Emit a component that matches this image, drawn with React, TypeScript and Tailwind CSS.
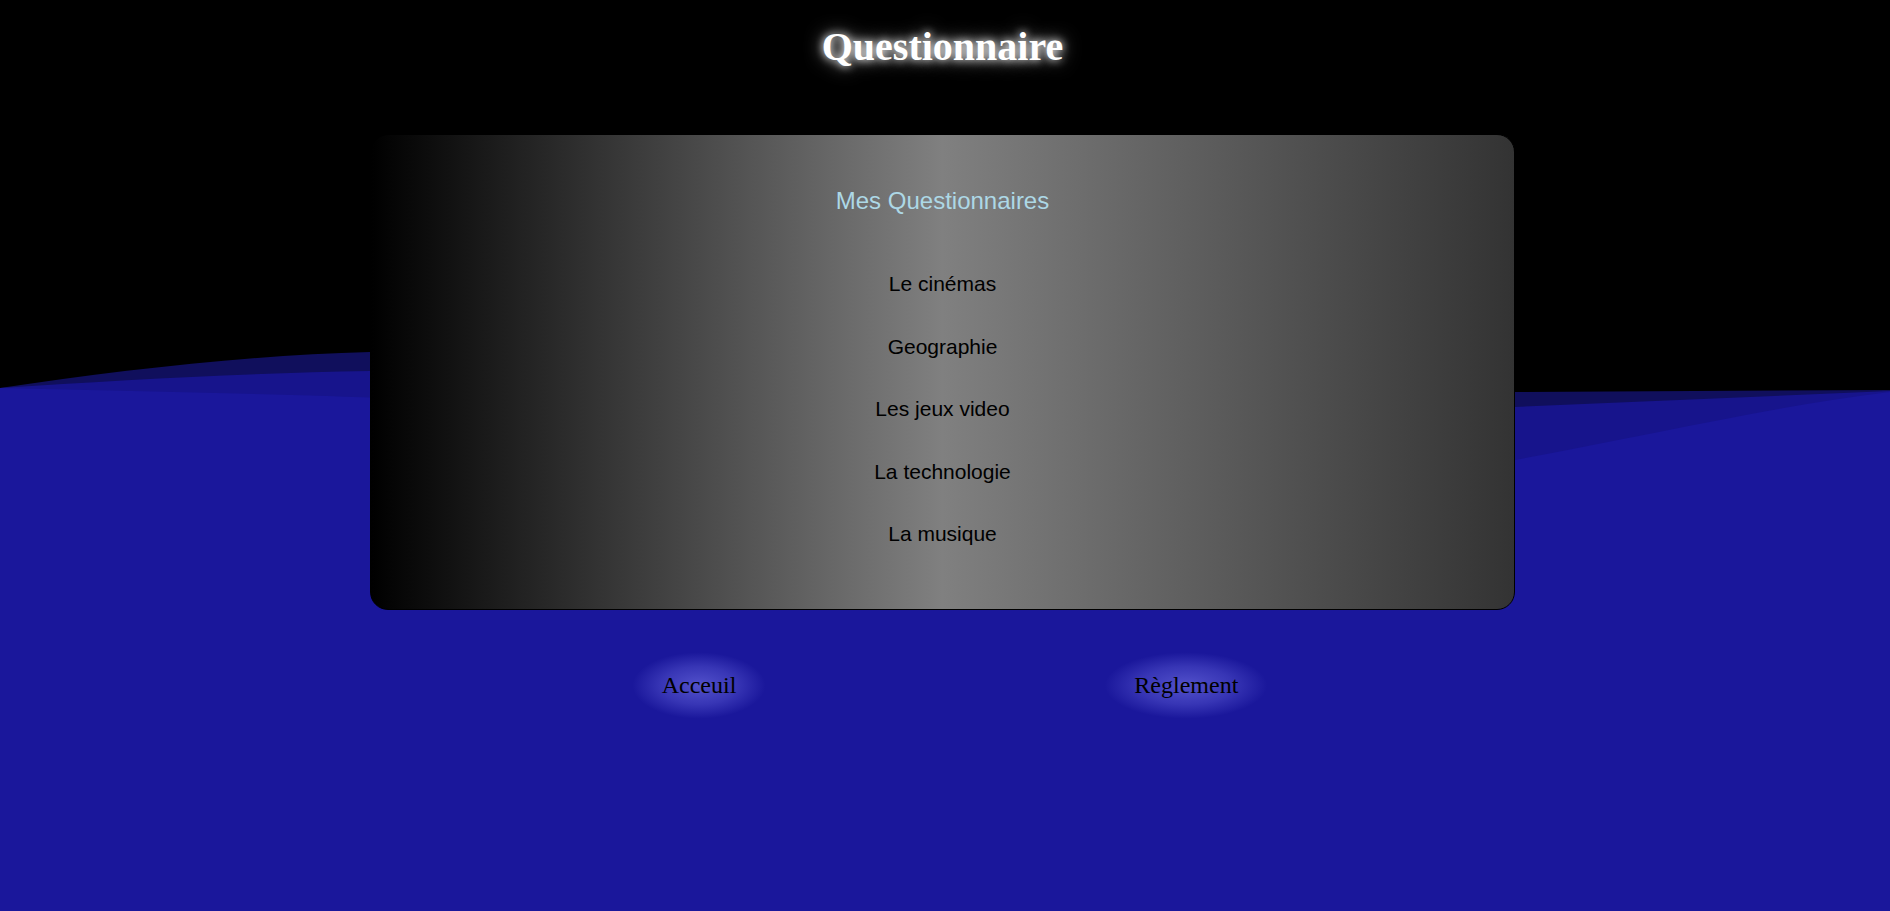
import React from "react";

const items = ["Le cinémas", "Geographie", "Les jeux video", "La technologie", "La musique"];

export default function App() {
  return (
    <div className="relative h-screen w-full overflow-hidden bg-black">
      <div className="absolute left-0 right-0 top-[340px] bottom-0 flex flex-col">
        <svg className="block h-[120px] w-full" viewBox="0 0 1890 120" preserveAspectRatio="none">
          <path d="M0,48 C120,30 250,15 370,12 L1515,52 L1890,50 L1890,120 L0,120 Z" fill="#100f5c" />
          <path d="M0,48 C120,40 250,33 370,31 L1515,67 L1890,51 L1890,120 L0,120 Z" fill="#17148c" />
          <path d="M0,48 C200,52 400,58 500,62 L1100,120 L1515,120 C1650,95 1780,65 1890,52 L1890,120 L0,120 Z" fill="#1a179b" />
        </svg>
        <div className="flex-1 bg-[#1a179b]" />
      </div>

      <div className="relative flex flex-col items-center pr-[5px]">
        <h1 className="mt-[24px] text-[40px] font-bold leading-[46px] text-white [font-family:'Liberation_Serif','Times_New_Roman',serif] [text-shadow:0_0_8px_#fff,0_0_18px_rgba(255,255,255,0.7)]">
          Questionnaire
        </h1>

        <div className="mt-[64px] flex w-[1145px] flex-col items-center rounded-[18px] border border-black bg-[linear-gradient(to_right,#000,#808080_50%,#333)] pt-[52px] pb-[43px] [font-family:'Liberation_Sans',Arial,sans-serif]">
          <h2 className="text-[24px] leading-[28px] font-normal text-[#add8e6]">Mes Questionnaires</h2>
          <ul className="mt-[38px] flex flex-col items-center">
            {items.map((t) => (
              <li key={t} className="h-[62.6px] text-[21px] leading-[62.6px] text-black">
                {t}
              </li>
            ))}
          </ul>
        </div>

        <div className="ml-[15px] mt-[42px] flex justify-center gap-[338px] [font-family:'Liberation_Serif','Times_New_Roman',serif]">
          <button className="bg-[radial-gradient(ellipse_at_center,rgba(120,120,235,0.6)_0%,rgba(110,110,230,0.35)_40%,rgba(110,110,230,0)_70%)] px-[30px] py-[20px] text-[24px] leading-[27px] text-black">
            Acceuil
          </button>
          <button className="bg-[radial-gradient(ellipse_at_center,rgba(120,120,235,0.6)_0%,rgba(110,110,230,0.35)_40%,rgba(110,110,230,0)_70%)] px-[30px] py-[20px] text-[24px] leading-[27px] text-black">
            Règlement
          </button>
        </div>
      </div>
    </div>
  );
}
